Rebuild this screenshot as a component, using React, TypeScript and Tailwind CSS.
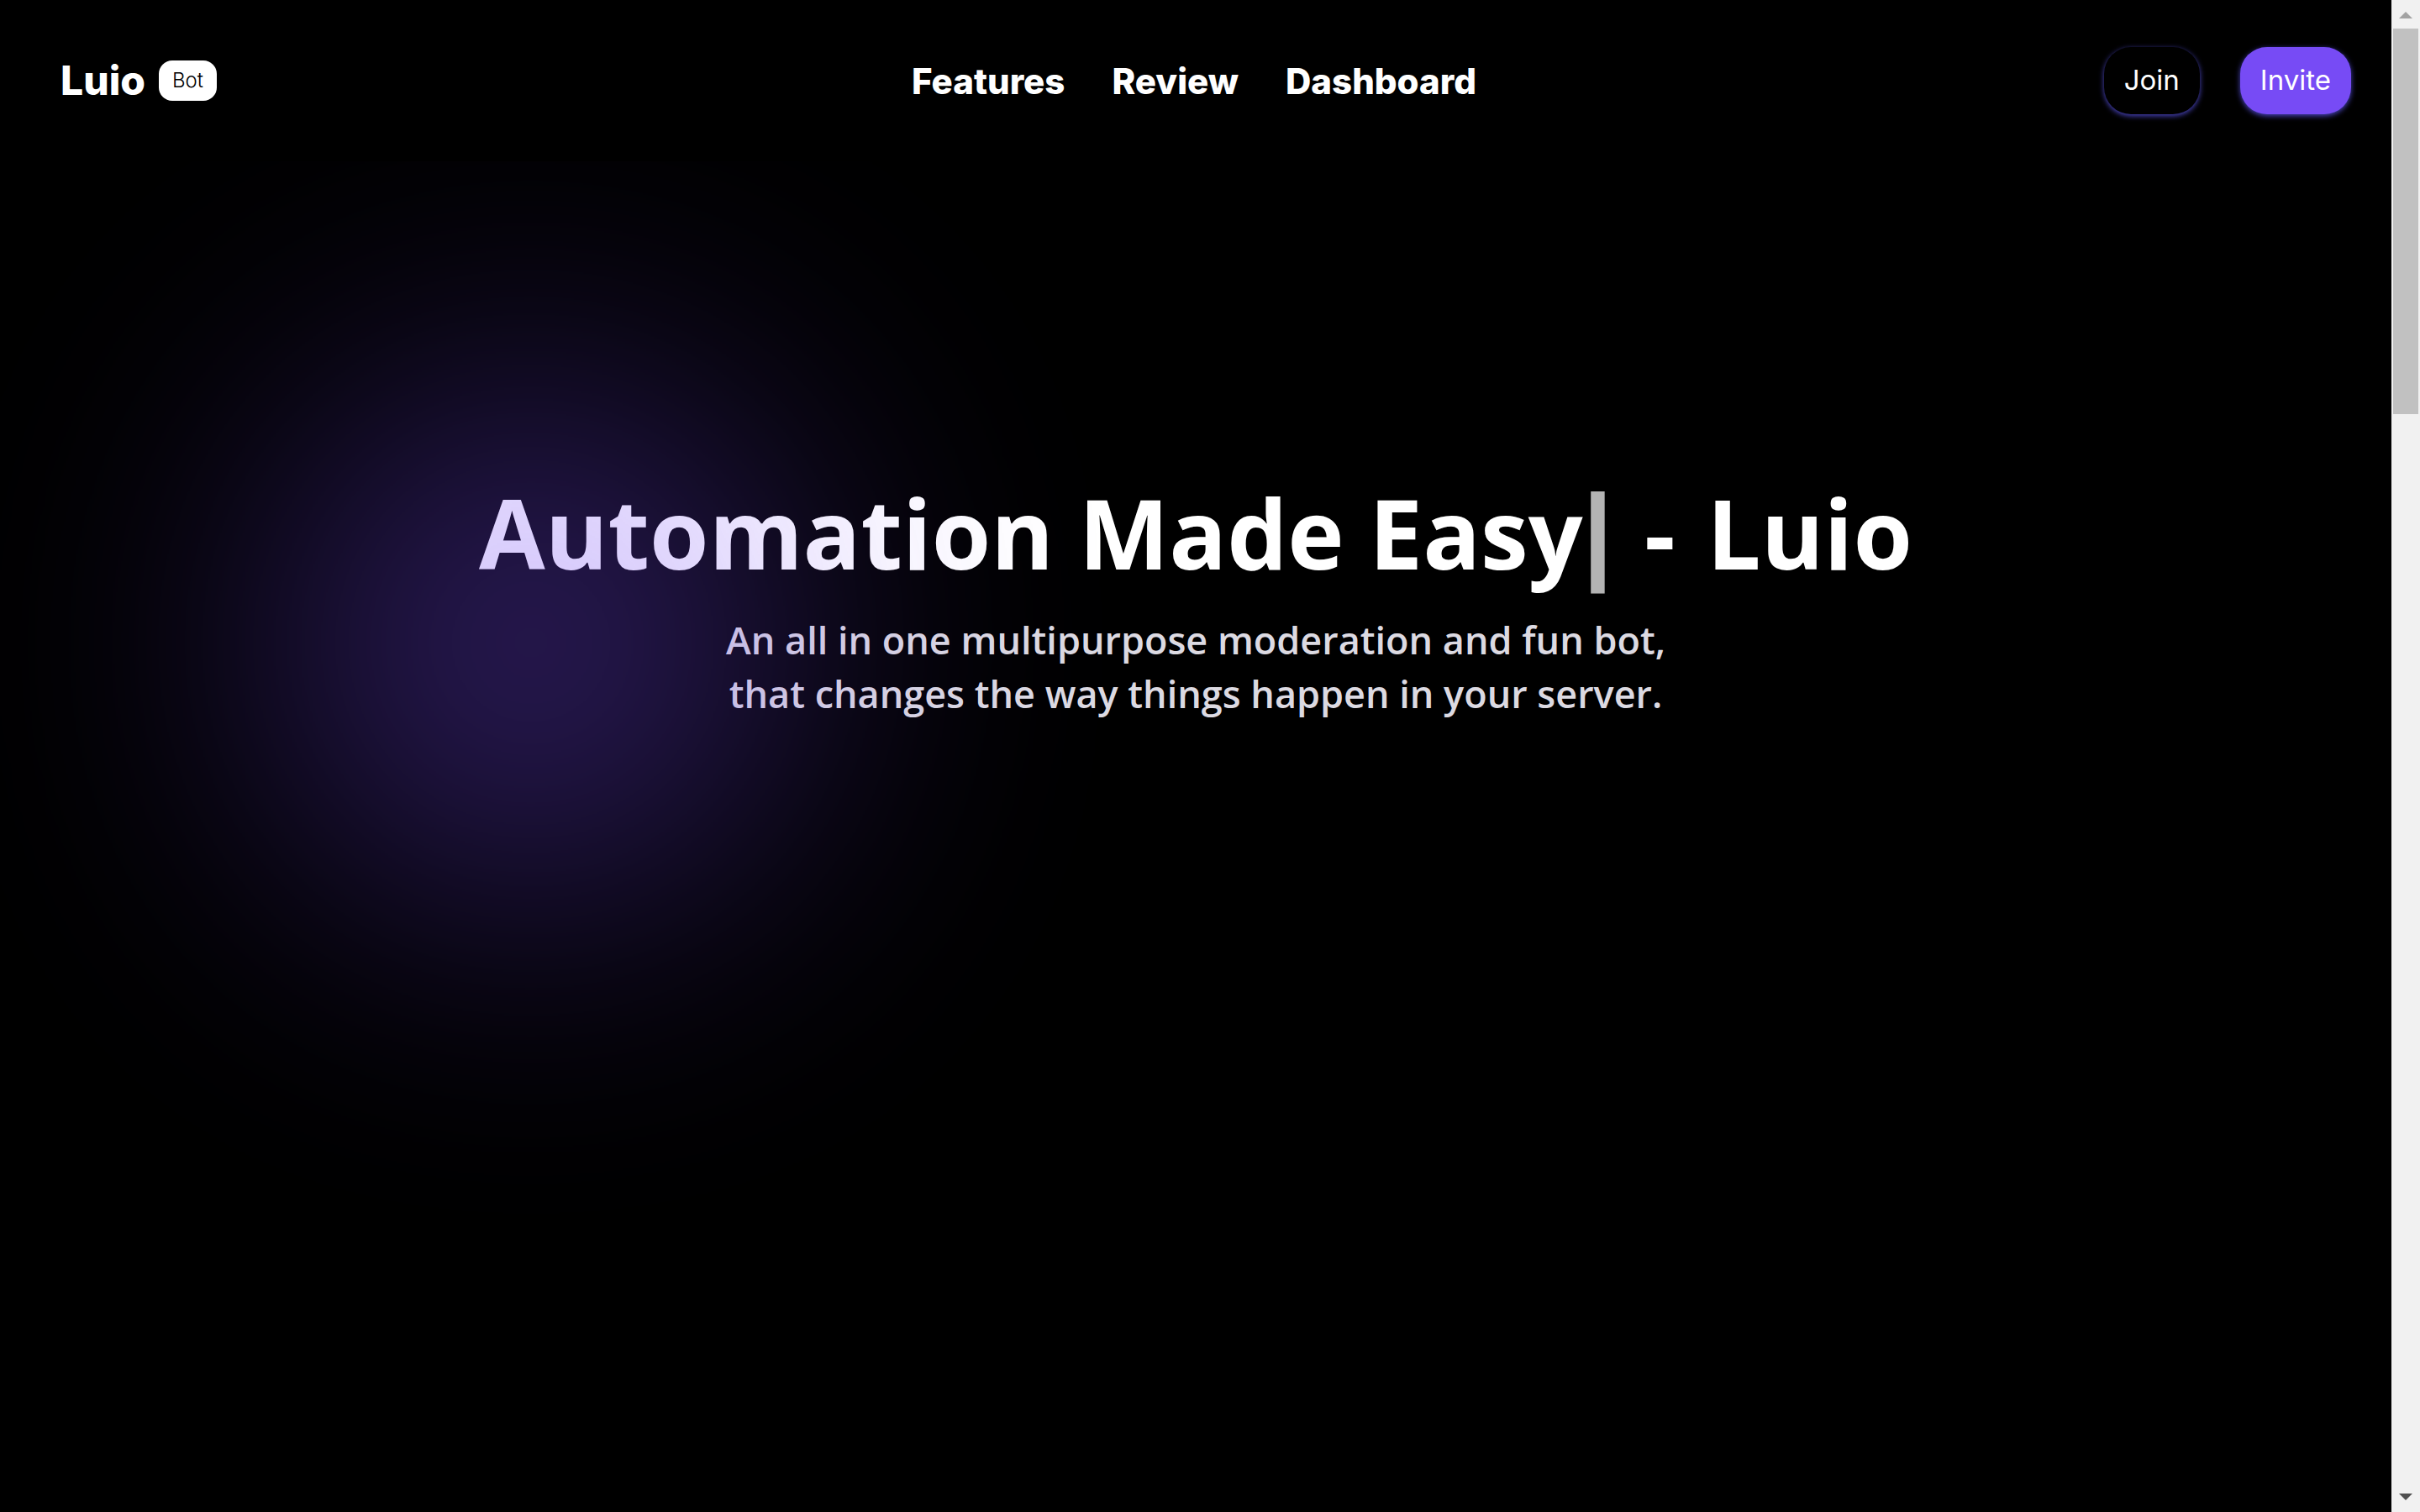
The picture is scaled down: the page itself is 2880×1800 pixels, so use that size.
const navItems = [
  { label: "Features", href: "#features" },
  { label: "Review", href: "#review" },
  { label: "Dashboard", href: "#dashboard" },
];

function Header() {
  return (
    <header className="relative z-10 grid h-48 grid-cols-[1fr_auto_1fr] items-center bg-black px-12 font-[Inter,sans-serif] text-white">
      <a href="#home" className="flex items-center gap-4 justify-self-start pl-6">
        <span className="text-[48px] leading-none font-extrabold">Luio</span>
        <span className="flex h-12 items-center rounded-2xl bg-white px-4 text-[24px] font-light text-black">
          Bot
        </span>
      </a>
      <nav className="flex items-center gap-14 pr-1 text-[42px] font-extrabold">
        {navItems.map((item) => (
          <a key={item.label} href={item.href}>
            {item.label}
          </a>
        ))}
      </nav>
      <div className="flex items-center gap-12 justify-self-end text-[33px]">
        <button
          type="button"
          className="h-20 rounded-[32px] bg-black px-6 shadow-[0_2px_6px_#4a45c0]"
        >
          Join
        </button>
        <button
          type="button"
          className="h-20 rounded-[32px] bg-[#774bf5] px-6 shadow-[0_2px_6px_#4a45c0]"
        >
          Invite
        </button>
      </div>
    </header>
  );
}

function Hero() {
  return (
    <section className="flex flex-col items-center pt-[362px] text-center font-['Open_Sans',sans-serif]">
      <h1 className="text-[114px] leading-[160px] font-bold text-white">
        Automation Made Easy
        <span className="mr-2 font-['Liberation_Sans',sans-serif] text-[128px] leading-none opacity-70">
          |
        </span>{" "}
        <span className="mr-2">-</span> Luio
      </h1>
      <p className="mt-4 text-[45px] leading-[64px] font-semibold text-[#dcdae2]">
        An all in one multipurpose moderation and fun bot,
        <br />
        that changes the way things happen in your server.
      </p>
    </section>
  );
}

function Glow() {
  return (
    <div className="pointer-events-none absolute top-[465px] left-[332px] size-[600px] rounded-full bg-[#774bf5] opacity-42 blur-[200px]" />
  );
}

function Scrollbar() {
  return (
    <div className="flex w-[34px] shrink-0 flex-col items-center bg-[#f1f1f1]" aria-hidden="true">
      <svg viewBox="0 0 34 34" className="size-[34px] shrink-0 fill-[#a3a3a3]">
        <path d="M9 22 17 14 25 22Z" />
      </svg>
      <div className="h-[459px] w-[30px] bg-[#c1c1c1]" />
      <div className="flex-1" />
      <svg viewBox="0 0 34 34" className="size-[34px] shrink-0 fill-[#505050]">
        <path d="M9 12 17 20 25 12Z" />
      </svg>
    </div>
  );
}

export default function App() {
  return (
    <div className="flex h-screen bg-black">
      <main className="relative flex-1 overflow-hidden">
        <Header />
        <Hero />
        <Glow />
      </main>
      <Scrollbar />
    </div>
  );
}
